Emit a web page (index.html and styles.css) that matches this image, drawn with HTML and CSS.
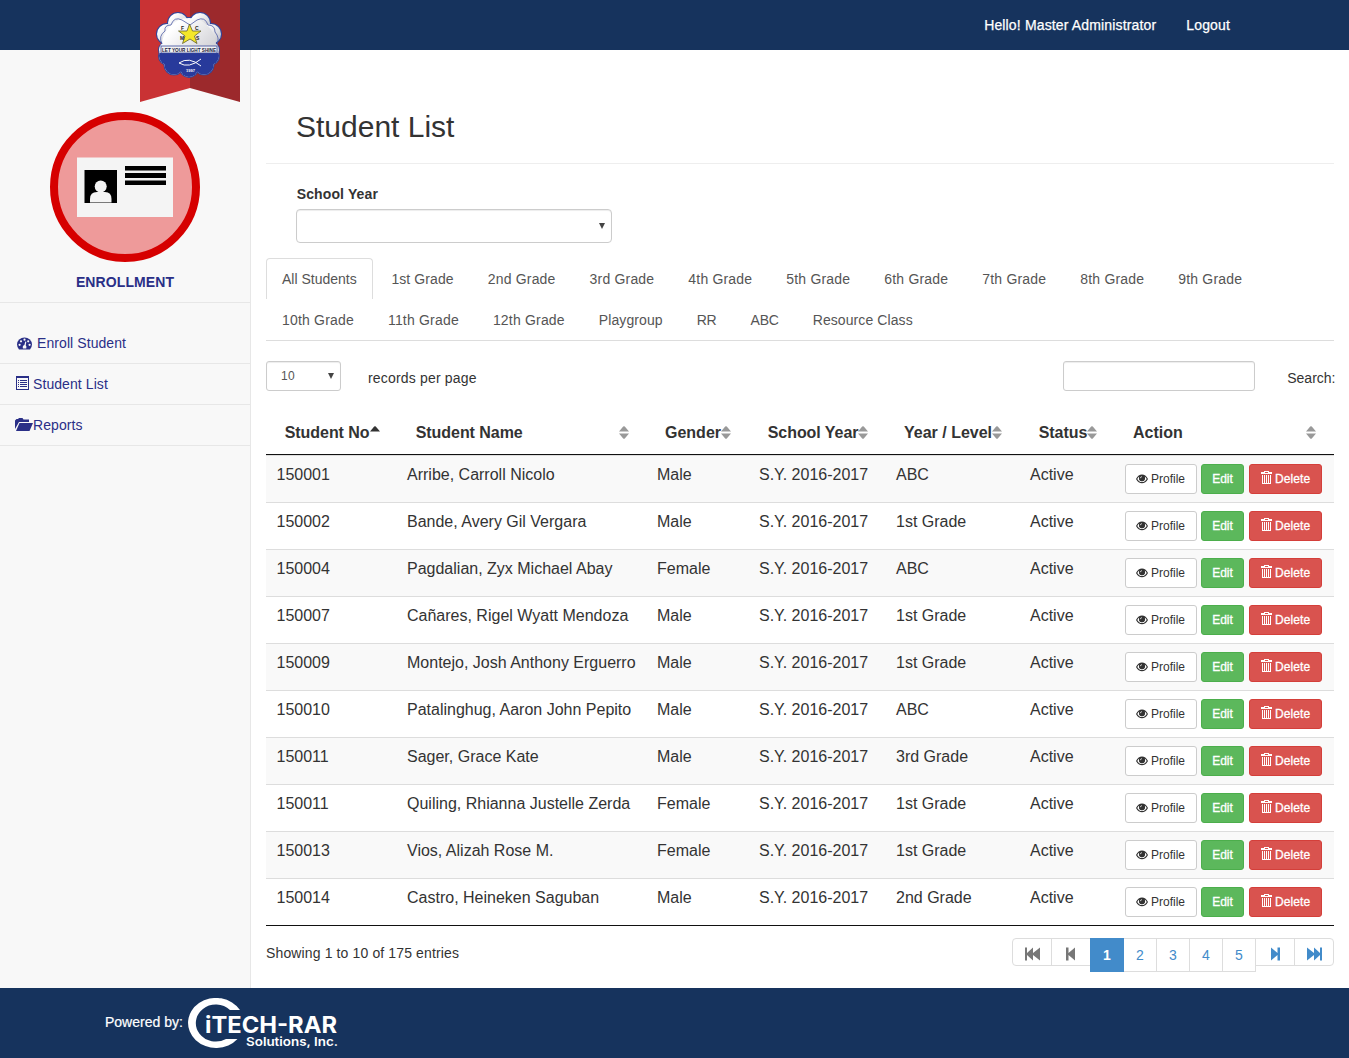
FILE: index.html
```html
<!DOCTYPE html>
<html lang="en">
<head>
<meta charset="utf-8">
<title>Student List</title>
<link rel="stylesheet" href="styles.css">
</head>
<body>
<svg class="sprite" aria-hidden="true">
  <symbol id="eye" viewBox="0 0 12 10"><path fill-rule="evenodd" d="M0 5C1.6 2.1 3.600.6 6 .6S10.400 2.100 12 5C10.400 7.900 8.400 9.200 6 9.200S1.600 7.900 0 5ZM1.300 5C2.400 7 3.900 8.100 6 8.100S9.600 7 10.700 5C10.200 4 9.500 3.100 8.700 2.500 9.700 5 8.300 7.200 6 7.200S2.300 5 3.300 2.500C2.500 3.100 1.800 4 1.300 5Z"/><circle cx="6" cy="4.300" r="2.900"/><path d="M4.300 4.200A1.800 1.800 0 0 1 6 2.600" fill="none" stroke="#fff" stroke-width=".7"/></symbol>
  <symbol id="trash" viewBox="0 0 11 13"><path fill-rule="evenodd" d="M3 1V0H8V1H11V3H0V1ZM4 1V2H7V1ZM1 4H10V13H1ZM2 4V12H3V4ZM4 4V12H5V4ZM6 4V12H7V4ZM8 4V12H9V4Z"/></symbol>
  <symbol id="sort" viewBox="0 0 10 13"><path d="M0 5.500 4.200.6Q5 0 5.800.6L10 5.500ZM0 7.500H10L5.800 12.400Q5 13 4.200 12.400Z"/></symbol>
  <symbol id="asc" viewBox="0 0 10 13"><path d="M0 5.500 4.200.6Q5 0 5.800.6L10 5.500Z"/></symbol>
  <symbol id="step" viewBox="0 0 10 14"><path d="M0 .5H2.500V6L9 .5V13.500L2.500 8V13.500H0Z"/></symbol>
  <symbol id="fast" viewBox="0 0 15 14"><path d="M0 .5H2V6L8 .5V6L15 .5V13.500L8 8V13.500L2 8V13.500H0Z"/></symbol>
</svg>

<header class="topbar">
  <svg class="ribbon" viewBox="0 0 100 102">
    <defs>
      <linearGradient id="silver" x1="0" y1="0" x2="1" y2="1"><stop offset=".2" stop-color="#fff"/><stop offset="1" stop-color="#bdbdc4"/></linearGradient>
      <clipPath id="lower"><path d="M10 53H90V90H10Z"/></clipPath>
      <g id="flower"><circle cx="38" cy="23" r="10"/><circle cx="60" cy="23" r="10"/><circle cx="27" cy="34" r="10"/><circle cx="71" cy="34" r="10"/><circle cx="27" cy="50" r="8"/><circle cx="71" cy="50" r="8"/><circle cx="28" cy="56" r="9"/><circle cx="70" cy="56" r="9"/><circle cx="34" cy="65" r="9.500"/><circle cx="64" cy="65" r="9.500"/><circle cx="49" cy="68" r="9"/><circle cx="49" cy="45" r="27"/></g>
    </defs>
    <path d="M0 0H50V88L0 102Z" fill="#c93234"/><path d="M50 0H100V102L50 88Z" fill="#9c292c"/>
    <use href="#flower" fill="#31459b" stroke="#31459b" stroke-width="2"/>
    <use href="#flower" fill="url(#silver)"/>
    <use href="#flower" fill="#283a9b" clip-path="url(#lower)"/>
    <path d="M22 44Q18 36 25 31 24 25 31 25 34 16 42 20L50 25 57 20Q65 16 68 25 75 25 75 32 80 38 77 44" fill="none" stroke="#4c5ca6" stroke-width=".8"/>
    <path d="M49.500 24 52.500 31H61L54.500 36 57 43.500 50 39 42.500 43.500 45 36 38.500 31H47Z" fill="#f4e72a" stroke="#62612b" stroke-width=".8"/>
    <text class="crest-small" x="41" y="30">F</text><text class="crest-small" x="55" y="30">C</text><text class="crest-small" x="40" y="40">M</text><text class="crest-small" x="56" y="40">S</text>
    <path d="M21 46H77V53H21Z" fill="#f2f2f2" stroke="#36489b" stroke-width=".8"/>
    <text class="crest-motto" x="22" y="51.800" textLength="54" lengthAdjust="spacingAndGlyphs">LET YOUR LIGHT SHINE</text>
    <path d="M39 63Q49 56 61 66M39 63Q49 69 61 59" fill="none" stroke="#fff" stroke-width="1"/>
    <text class="crest-year" x="46" y="71.500">1997</text>
  </svg>
  <nav class="user-nav"><span>Hello! Master Administrator</span><span>Logout</span></nav>
</header>

<div class="page">
  <aside class="sidebar">
    <div class="module">
      <svg class="badge" viewBox="0 0 150 150">
        <circle cx="75" cy="75" r="71" fill="#ee9a9a" stroke="#d60000" stroke-width="8"/>
        <path d="M27 45.500H123V105H27Z" fill="#f4f4f4"/>
        <path d="M34.500 58H67V91H34.500ZM75 54H116V58.500H75ZM75 61H116V66H75ZM75 68.500H116V73H75Z"/>
        <circle cx="50.700" cy="74.500" r="6" fill="#f4f4f4"/><path d="M40 90.500V87Q40 80 47 80H55Q61.500 80 61.500 87V90.500Z" fill="#f4f4f4"/>
      </svg>
      <strong>ENROLLMENT</strong>
    </div>
    <nav class="side-nav">
      <a class="side-link"><svg class="i-dash" viewBox="0 0 15 13"><path d="M2 12.500Q0 10 0 7.500A7.500 7 0 0 1 15 7.500Q15 10 13 12.500Z" fill="#2a2f87"/><g fill="#f8f8f8"><circle cx="2.600" cy="7.800" r="1.100"/><circle cx="4" cy="4.300" r="1.100"/><circle cx="7.500" cy="2.700" r="1.100"/><circle cx="11.200" cy="4.300" r="1.100"/><circle cx="12.600" cy="7.800" r="1.100"/><path d="M8.300 4.500 9.400 4.800 8.700 8.300Q10 9.500 9.200 11.500H6Q5 9 7.400 8Z"/></g></svg>Enroll Student</a>
      <a class="side-link"><svg class="i-list" viewBox="0 0 13 14"><path fill-rule="evenodd" d="M0 0H13V14H0ZM1 2V13H12V2ZM2 4H3V5H2ZM4 4H11V5H4ZM2 6H3V7H2ZM4 6H11V7H4ZM2 8H3V9H2ZM4 8H11V9H4ZM2 10H3V11H2ZM4 10H11V11H4Z" fill="#2a2f87"/></svg>Student List</a>
      <a class="side-link"><svg class="i-folder" viewBox="0 0 18 14"><path d="M0 11V2.500L1.500 1H3L4 0H7.500L8.500 1.500H14V4H4Z" fill="#2a2f87"/><path d="M4.500 5H18L14.500 13H1Z" fill="#2a2f87"/></svg>Reports</a>
    </nav>
  </aside>

  <main class="content">
    <h2>Student List</h2>
    <div class="filter"><label>School Year</label><div class="select"><span></span><i class="caret"></i></div></div>
    <ul class="tabs">
      <li class="active">All Students</li><li class="tight">1st Grade</li><li>2nd Grade</li><li>3rd Grade</li><li>4th Grade</li><li>5th Grade</li><li>6th Grade</li><li>7th Grade</li><li>8th Grade</li><li>9th Grade</li><li>10th Grade</li><li>11th Grade</li><li>12th Grade</li><li class="tight">Playgroup</li><li class="narrow">RR</li><li class="narrow">ABC</li><li class="tight">Resource Class</li>
    </ul>
    <div class="controls">
      <div class="select small"><span>10</span><i class="caret"></i></div><span class="per-page">records per page</span>
      <input class="search" type="text"><span class="search-label">Search:</span>
    </div>
    <table class="students">
      <colgroup><col class="c-no"><col class="c-name"><col class="c-gender"><col class="c-sy"><col class="c-level"><col class="c-status"><col class="c-action"></colgroup>
      <thead><tr>
        <th><div>Student No<svg class="asc"><use href="#asc"/></svg></div></th>
        <th><div>Student Name<svg><use href="#sort"/></svg></div></th>
        <th><div>Gender<svg><use href="#sort"/></svg></div></th>
        <th><div>School Year<svg><use href="#sort"/></svg></div></th>
        <th><div>Year / Level<svg><use href="#sort"/></svg></div></th>
        <th><div>Status<svg><use href="#sort"/></svg></div></th>
        <th><div>Action<svg><use href="#sort"/></svg></div></th>
      </tr></thead>
      <tbody>
        <tr><td>150001</td><td>Arribe, Carroll Nicolo</td><td>Male</td><td>S.Y. 2016-2017</td><td>ABC</td><td>Active</td><td><div class="actions"><a class="btn profile"><svg><use href="#eye"/></svg>Profile</a><a class="btn edit">Edit</a><a class="btn delete"><svg><use href="#trash"/></svg>Delete</a></div></td></tr>
        <tr><td>150002</td><td>Bande, Avery Gil Vergara</td><td>Male</td><td>S.Y. 2016-2017</td><td>1st Grade</td><td>Active</td><td><div class="actions"><a class="btn profile"><svg><use href="#eye"/></svg>Profile</a><a class="btn edit">Edit</a><a class="btn delete"><svg><use href="#trash"/></svg>Delete</a></div></td></tr>
        <tr><td>150004</td><td>Pagdalian, Zyx Michael Abay</td><td>Female</td><td>S.Y. 2016-2017</td><td>ABC</td><td>Active</td><td><div class="actions"><a class="btn profile"><svg><use href="#eye"/></svg>Profile</a><a class="btn edit">Edit</a><a class="btn delete"><svg><use href="#trash"/></svg>Delete</a></div></td></tr>
        <tr><td>150007</td><td>Cañares, Rigel Wyatt Mendoza</td><td>Male</td><td>S.Y. 2016-2017</td><td>1st Grade</td><td>Active</td><td><div class="actions"><a class="btn profile"><svg><use href="#eye"/></svg>Profile</a><a class="btn edit">Edit</a><a class="btn delete"><svg><use href="#trash"/></svg>Delete</a></div></td></tr>
        <tr><td>150009</td><td>Montejo, Josh Anthony Erguerro</td><td>Male</td><td>S.Y. 2016-2017</td><td>1st Grade</td><td>Active</td><td><div class="actions"><a class="btn profile"><svg><use href="#eye"/></svg>Profile</a><a class="btn edit">Edit</a><a class="btn delete"><svg><use href="#trash"/></svg>Delete</a></div></td></tr>
        <tr><td>150010</td><td>Patalinghug, Aaron John Pepito</td><td>Male</td><td>S.Y. 2016-2017</td><td>ABC</td><td>Active</td><td><div class="actions"><a class="btn profile"><svg><use href="#eye"/></svg>Profile</a><a class="btn edit">Edit</a><a class="btn delete"><svg><use href="#trash"/></svg>Delete</a></div></td></tr>
        <tr><td>150011</td><td>Sager, Grace Kate</td><td>Male</td><td>S.Y. 2016-2017</td><td>3rd Grade</td><td>Active</td><td><div class="actions"><a class="btn profile"><svg><use href="#eye"/></svg>Profile</a><a class="btn edit">Edit</a><a class="btn delete"><svg><use href="#trash"/></svg>Delete</a></div></td></tr>
        <tr><td>150011</td><td>Quiling, Rhianna Justelle Zerda</td><td>Female</td><td>S.Y. 2016-2017</td><td>1st Grade</td><td>Active</td><td><div class="actions"><a class="btn profile"><svg><use href="#eye"/></svg>Profile</a><a class="btn edit">Edit</a><a class="btn delete"><svg><use href="#trash"/></svg>Delete</a></div></td></tr>
        <tr><td>150013</td><td>Vios, Alizah Rose M.</td><td>Female</td><td>S.Y. 2016-2017</td><td>1st Grade</td><td>Active</td><td><div class="actions"><a class="btn profile"><svg><use href="#eye"/></svg>Profile</a><a class="btn edit">Edit</a><a class="btn delete"><svg><use href="#trash"/></svg>Delete</a></div></td></tr>
        <tr><td>150014</td><td>Castro, Heineken Saguban</td><td>Male</td><td>S.Y. 2016-2017</td><td>2nd Grade</td><td>Active</td><td><div class="actions"><a class="btn profile"><svg><use href="#eye"/></svg>Profile</a><a class="btn edit">Edit</a><a class="btn delete"><svg><use href="#trash"/></svg>Delete</a></div></td></tr>
      </tbody>
    </table>
    <div class="table-foot">
      <span class="info">Showing 1 to 10 of 175 entries</span>
      <ul class="pagination">
        <li class="arrow off first"><svg class="fast"><use href="#fast"/></svg></li><li class="arrow off"><svg class="step"><use href="#step"/></svg></li><li class="current">1</li><li>2</li><li>3</li><li>4</li><li>5</li><li class="arrow"><svg class="step flip"><use href="#step"/></svg></li><li class="arrow last"><svg class="fast flip"><use href="#fast"/></svg></li>
      </ul>
    </div>
  </main>
</div>

<footer class="footer">
  <span>Powered by:</span>
  <svg class="logo" viewBox="0 0 150 50">
    <path d="M52 12A28 25 0 1 0 49.500 41H38A20 18.500 0 1 1 42 12Z" fill="#fff"/>
    <text class="logo-name" x="17" y="35" textLength="132" lengthAdjust="spacingAndGlyphs">iTECH-RAR</text>
    <text class="logo-sub" x="58" y="48" textLength="92" lengthAdjust="spacingAndGlyphs">Solutions, Inc.</text>
  </svg>
</footer>
</body>
</html>
```
FILE: styles.css
```css
* { box-sizing: border-box; }
body { margin: 0; font: 14px/20px "Liberation Sans", Arial, sans-serif; color: #333; background: #fff; }
ul { list-style: none; margin: 0; padding: 0; }
svg { display: block; flex: none; }
.sprite { position: absolute; width: 0; height: 0; }

.topbar { position: relative; height: 50px; background: #16335d; color: #fff; display: flex; justify-content: flex-end; align-items: center; padding-right: 119px; }
.ribbon { position: absolute; left: 140px; top: 0; width: 100px; height: 102px; z-index: 2; }
.crest-small { font: bold 5px "Liberation Sans", sans-serif; fill: #222; }
.crest-motto { font: bold 6px "Liberation Sans", sans-serif; fill: #15183a; }
.crest-year { font: bold 4px "Liberation Sans", sans-serif; fill: #fff; }
.user-nav { display: flex; gap: 30px; letter-spacing: .15px; -webkit-text-stroke: .25px #fff; }

.page { display: flex; height: 938px; }
.sidebar { width: 251px; flex: none; background: #f8f8f8; border-right: 1px solid #e7e7e7; color: #2a2f87; }
.module { height: 253px; padding-top: 62px; border-bottom: 1px solid #e7e7e7; display: flex; flex-direction: column; align-items: center; gap: 10px; }
.module strong { letter-spacing: .1px; }
.badge { width: 150px; height: 150px; }
.side-nav { padding-top: 20px; letter-spacing: .08px; }
.side-link { display: flex; align-items: center; height: 41px; padding-left: 15px; border-bottom: 1px solid #e7e7e7; }
.i-dash { width: 15px; height: 13px; margin: 0 5px 0 2px; }
.i-list { width: 13px; height: 14px; margin: 0 4px 2px 1px; }
.i-folder { width: 18px; height: 14px; }

.content { flex: none; width: 1098px; padding: 60px 15px 0; }
h2 { margin: 0 0 20px; padding: 0 30px 20px; font-size: 30px; line-height: 33px; font-weight: 400; border-bottom: 1px solid #eee; }
.filter { padding: 0 30px; margin-bottom: 15px; }
.filter label { display: block; font-weight: 700; margin: 0 0 5px .7px; letter-spacing: .13px; }
.select { width: 316px; height: 34px; border: 1px solid #ccc; border-radius: 4px; display: flex; align-items: center; justify-content: space-between; padding: 0 6px 0 14px; box-shadow: inset 0 1px 1px rgba(0,0,0,.075); color: #555; }
.caret { border: solid transparent; border-width: 6px 3.500px 0; border-top-color: #444; }
.select.small { width: 75px; height: 30px; border-radius: 3px; font-size: 12px; letter-spacing: .3px; }

.tabs { display: flex; flex-wrap: wrap; border-bottom: 1px solid #ddd; }
.tabs li { height: 42px; margin: 0 2px -1px 0; padding: 10px 15px; border: 1px solid transparent; border-radius: 4px 4px 0 0; color: #555; letter-spacing: .19px; }
.tabs .active { height: 41px; border-color: #ddd; border-bottom: 0; letter-spacing: 0; }
.tabs .active + li { margin-left: .7px; }
.tabs .tight { letter-spacing: .09px; }
.tabs .narrow { letter-spacing: -.2px; }

.controls { display: flex; height: 68px; padding-top: 20px; }
.per-page { margin: 7px 0 0 27px; letter-spacing: .18px; }
.search { margin-left: auto; width: 192px; height: 30px; border: 1px solid #ccc; border-radius: 3px; box-shadow: inset 0 1px 1px rgba(0,0,0,.075); }
.search-label { margin: 7px -1.500px 0 32px; }

.students { width: 1068px; table-layout: fixed; border-collapse: separate; border-spacing: 0; border-bottom: 1px solid #111; font-size: 16px; line-height: 22px; }
.c-no { width: 131px; } .c-name { width: 250px; } .c-gender { width: 102px; } .c-sy { width: 137px; } .c-level { width: 134px; } .c-status { width: 95px; } .c-action { width: 219px; }
th { height: 46px; padding: 3px 18px 0; border-bottom: 1px solid #111; }
th div { display: flex; align-items: center; justify-content: space-between; white-space: nowrap; }
th:nth-child(-n+2), th:nth-child(4), th:nth-child(6) { padding-left: 18.700px; letter-spacing: -.05px; }
th svg { width: 10px; height: 13px; margin-bottom: 1px; fill: #999; }
th .asc { fill: #333; }
td { height: 47px; padding: 8px 0 8px 10px; border-top: 1px solid #ddd; vertical-align: top; white-space: nowrap; }
td:first-child { padding-left: 10.500px; }
tbody tr:nth-child(odd) { background: #f9f9f9; }
.actions { display: flex; }
.btn { height: 30px; border: 1px solid; border-radius: 3px; display: flex; align-items: center; justify-content: center; font-size: 12px; line-height: 18px; color: #fff; }
.profile { width: 72px; margin-right: 4px; padding-left: 10px; justify-content: flex-start; background: #fff; border-color: #ccc; color: #333; }
.profile svg { width: 12px; height: 10px; margin: 0 3px 0 0; fill: #333; }
.edit, .delete { -webkit-text-stroke: .3px #fff; }
.edit { width: 43px; margin-right: 5px; background: #5cb85c; border-color: #4cae4c; }
.delete { width: 73px; padding-left: 11px; justify-content: flex-start; letter-spacing: .1px; background: #d9534f; border-color: #d43f3a; }
.delete svg { width: 11px; height: 13px; margin: 0 3px 3px 0; fill: #fff; stroke: none; }

.table-foot { display: flex; justify-content: space-between; padding-top: 12px; }
.info { margin-top: 5px; letter-spacing: .13px; }
.pagination { display: flex; align-items: flex-start; color: #428bca; }
.pagination li { width: 34px; height: 34px; margin-left: -1px; border: 1px solid #ddd; display: flex; align-items: center; justify-content: center; }
.pagination .arrow { width: 40px; height: 28px; fill: #428bca; }
.pagination .off { fill: #777; }
.pagination .first { border-radius: 4px 0 0 4px; margin-left: 0; }
.pagination .last { border-radius: 0 4px 4px 0; }
.pagination .current { background: #428bca; border-color: #428bca; color: #fff; font-weight: 700; z-index: 1; }
.step { width: 10px; height: 14px; margin-top: 3px; }
.fast { width: 15px; height: 14px; margin-top: 3px; }
.flip { transform: scaleX(-1); }

.footer { height: 70px; background: #16335d; color: #fff; display: flex; align-items: center; padding-left: 105px; }
.footer span { width: 83px; padding-bottom: 2px; -webkit-text-stroke: .2px #fff; }
.logo { width: 150px; height: 50px; }
.logo-name { font: 700 23px Inter, sans-serif; fill: #fff; }
.logo-sub { font: 600 12px Inter, sans-serif; fill: #fff; }
```
